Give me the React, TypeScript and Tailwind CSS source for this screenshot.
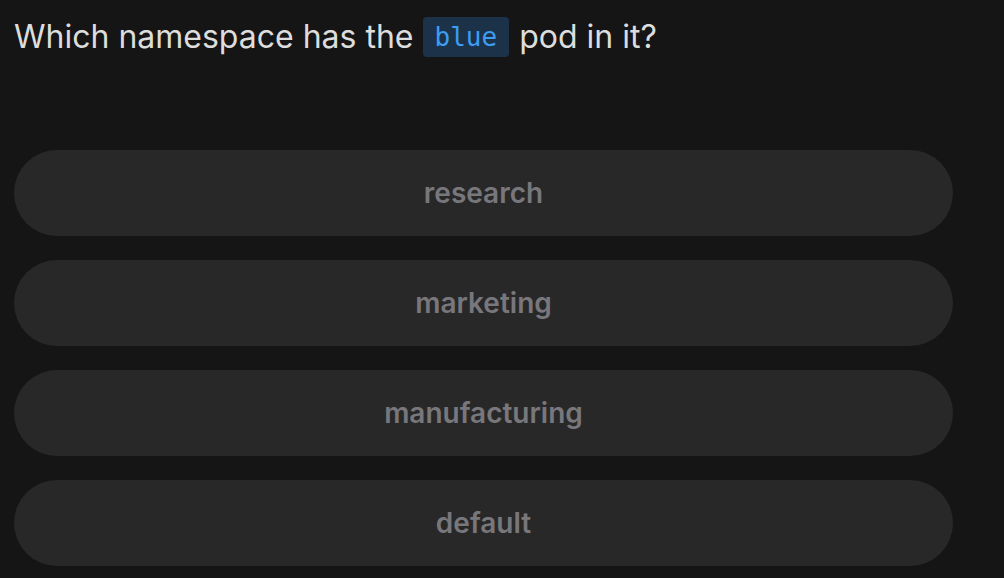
const OPTIONS = ["research", "marketing", "manufacturing", "default"];

export default function App() {
  return (
    <div className="min-h-[578px] w-[1004px] bg-[#151515] px-[14px] pt-[17px] font-['Inter',sans-serif]">
      <h1 className="flex items-center text-[32px] font-normal leading-[40px] text-[#dddddd]">
        <span>Which namespace has the</span>
        <code className="ml-[9px] mr-[10px] rounded-[4px] bg-[#1c3249] px-[12px] font-['DejaVu_Sans_Mono',monospace] text-[26px] leading-[40px] text-[#3d9df2]">
          blue
        </code>
        <span>pod in it?</span>
      </h1>
      <div className="mt-[93px] flex w-[939px] flex-col gap-[24px]">
        {OPTIONS.map((option) => (
          <button
            key={option}
            type="button"
            className="flex h-[86px] items-center justify-center rounded-full bg-[#282828] text-[28px] font-semibold text-[#78777c]"
          >
            {option}
          </button>
        ))}
      </div>
    </div>
  );
}
